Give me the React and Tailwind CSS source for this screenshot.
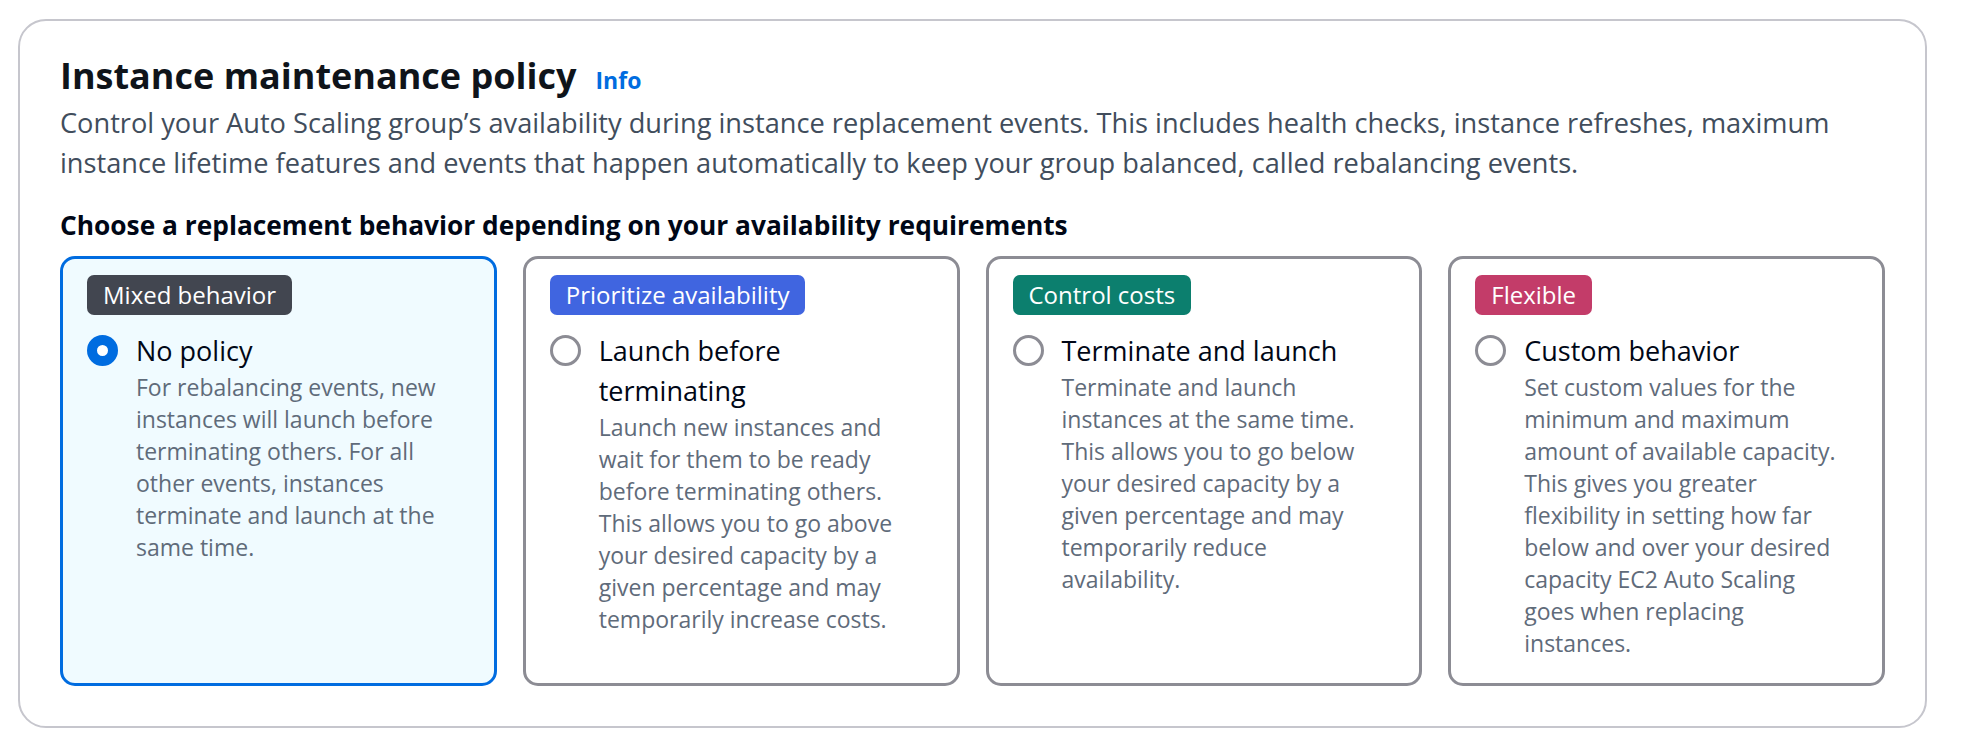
import React from 'react';

// line breaks follow the reference wrap, so they don't depend on font metrics
const options = [
  {
    badge: 'Mixed behavior',
    badgeClass: 'bg-[#424650]',
    label: ['No policy'],
    desc: [
      'For rebalancing events, new',
      'instances will launch before',
      'terminating others. For all',
      'other events, instances',
      'terminate and launch at the',
      'same time.',
    ],
    selected: true,
  },
  {
    badge: 'Prioritize availability',
    badgeClass: 'bg-[#4065e0]',
    label: ['Launch before', 'terminating'],
    desc: [
      'Launch new instances and',
      'wait for them to be ready',
      'before terminating others.',
      'This allows you to go above',
      'your desired capacity by a',
      'given percentage and may',
      'temporarily increase costs.',
    ],
  },
  {
    badge: 'Control costs',
    badgeClass: 'bg-[#0c7f6e]',
    label: ['Terminate and launch'],
    desc: [
      'Terminate and launch',
      'instances at the same time.',
      'This allows you to go below',
      'your desired capacity by a',
      'given percentage and may',
      'temporarily reduce',
      'availability.',
    ],
  },
  {
    badge: 'Flexible',
    badgeClass: 'bg-[#c33c69]',
    label: ['Custom behavior'],
    desc: [
      'Set custom values for the',
      'minimum and maximum',
      'amount of available capacity.',
      'This gives you greater',
      'flexibility in setting how far',
      'below and over your desired',
      'capacity EC2 Auto Scaling',
      'goes when replacing',
      'instances.',
    ],
  },
];

const Radio = ({ checked }) =>
  checked ? (
    <div className="w-[31px] h-[31px] rounded-full border-[10px] border-[#006ce0] bg-white shrink-0" />
  ) : (
    <div className="w-[31px] h-[31px] rounded-full border-[3px] border-[#8c8c94] bg-white shrink-0" />
  );

const Tile = ({ option }) => (
  <div
    className={`h-[430px] rounded-[15px] border-[3px] px-[24px] pt-[16px] ${
      option.selected ? 'border-[#006ce0] bg-[#f0fbff]' : 'border-[#8c8c94] bg-white'
    }`}
  >
    <span
      className={`inline-block h-[40px] rounded-[7px] px-[16px] text-[24px] leading-[40px] text-white ${option.badgeClass}`}
    >
      {option.badge}
    </span>
    <div className="mt-[16px] flex gap-[18px]">
      <div className="pt-[4px]">
        <Radio checked={option.selected} />
      </div>
      <div className="min-w-0 whitespace-nowrap">
        <div className="text-[27px] leading-[40px] text-[#000716]">
          {option.label.map((l) => (
            <div key={l}>{l}</div>
          ))}
        </div>
        <div className="text-[23px] leading-[32px] text-[#5f6b7a]">
          {option.desc.map((l) => (
            <div key={l}>{l}</div>
          ))}
        </div>
      </div>
    </div>
  </div>
);

const App = () => {
  return (
    <div className="bg-white min-h-[746px] pt-[19px] pl-[18px] pr-[35px] font-['Open_Sans','Noto_Sans',sans-serif]">
      <div className="rounded-[28px] border-2 border-[#c6c6cd] px-[40px] pt-[31px] pb-[40px]">
        <div className="flex items-baseline gap-[19px]">
          <h2 className="text-[36px] leading-[48px] font-bold text-[#0f141a]">Instance maintenance policy</h2>
          <a href="#" className="text-[23px] font-bold text-[#006ce0]">Info</a>
        </div>
        <p className="mt-[3px] text-[27.2px] leading-[40px] text-[#414d5c]">
          Control your Auto Scaling group’s availability during instance replacement events. This includes health checks, instance refreshes, maximum instance lifetime features and events that happen automatically to keep your group balanced, called rebalancing events.
        </p>
        <div className="mt-[24px] text-[26.3px] leading-[36px] font-bold text-[#000716]">
          Choose a replacement behavior depending on your availability requirements
        </div>
        <div className="mt-[13px] grid grid-cols-4 gap-[26px]">
          {options.map((o) => (
            <Tile key={o.badge} option={o} />
          ))}
        </div>
      </div>
    </div>
  );
};

export default App;
